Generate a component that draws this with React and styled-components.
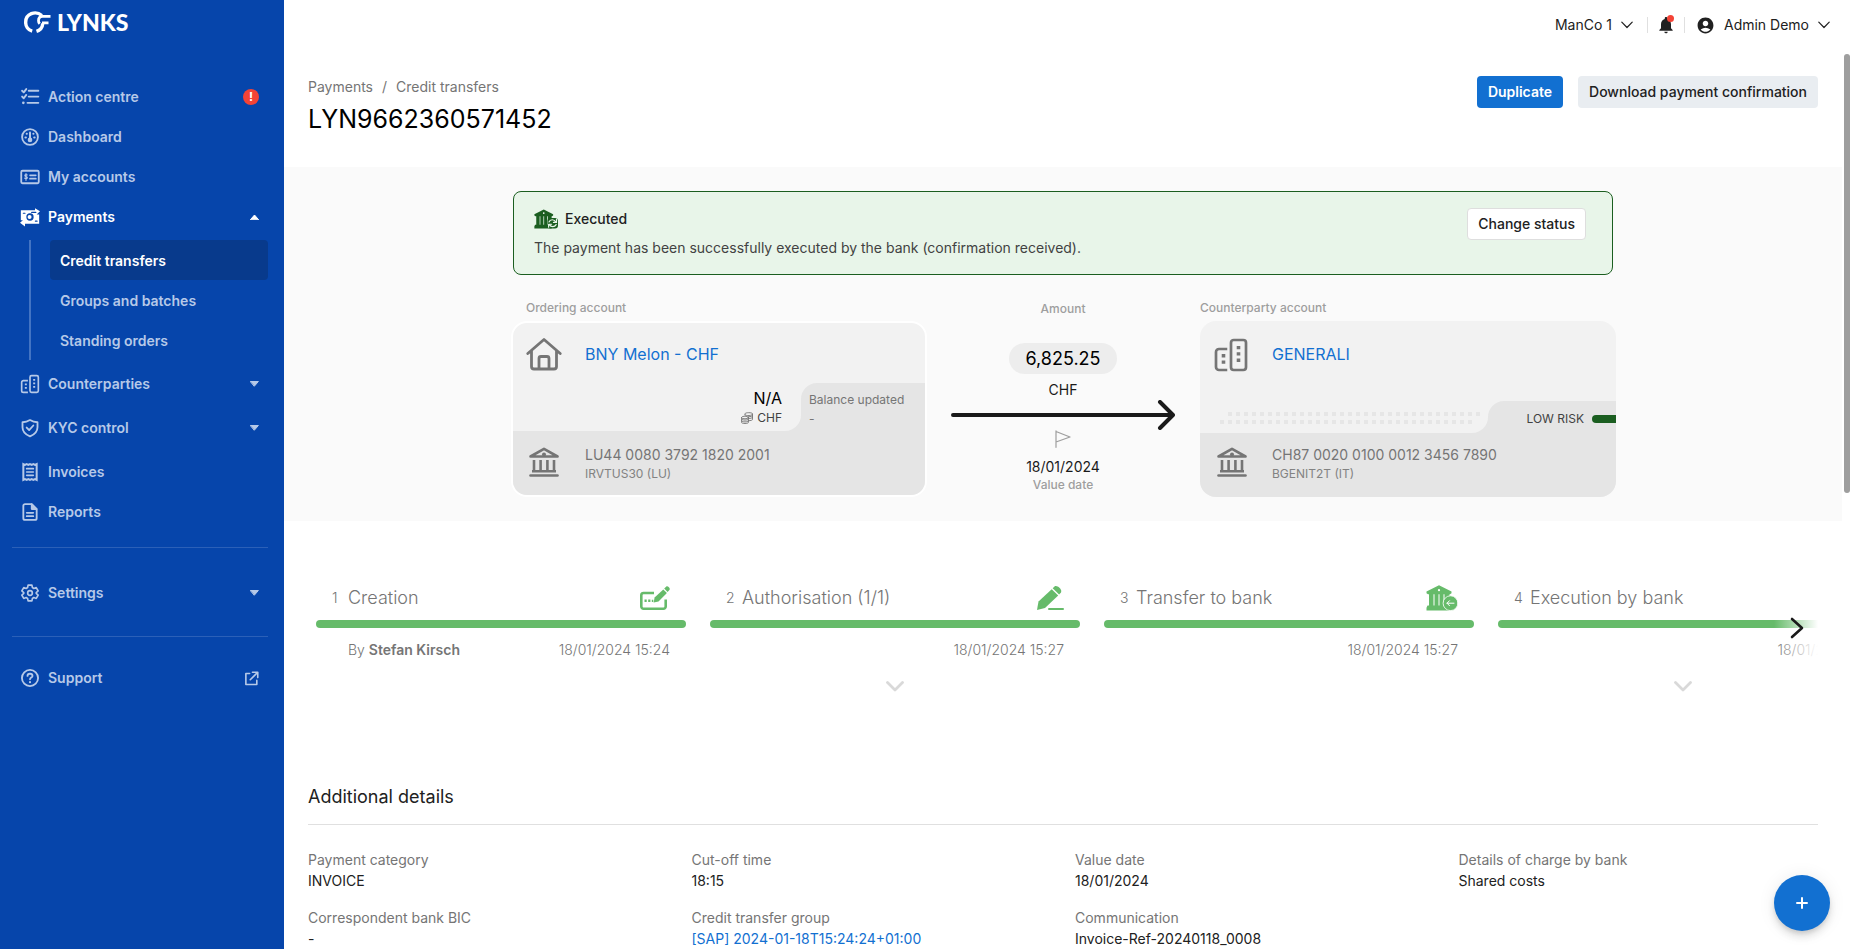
import React from "react";
import styled, { createGlobalStyle, css } from "styled-components";
import { MdAccountCircle, MdNotifications } from "react-icons/md";

const GlobalStyle = createGlobalStyle`
  *, *::before, *::after { box-sizing: border-box; }
  body { margin: 0; font-family: Inter, "Liberation Sans", sans-serif; font-size: 14px; line-height: 20px; color: #212121; background: #fff; }
  button { font: inherit; color: inherit; border: 0; background: none; padding: 0; cursor: pointer; }
  a { color: inherit; text-decoration: none; }
  h1, h2, p, dl, dd, ul, ol { margin: 0; padding: 0; font-weight: 400; list-style: none; }
  svg { display: block; flex: none; }
`;

/* ---------- icons ---------- */

const Icon = ({ size = 18, w, h, box = 24, children, ...rest }) => (
  <svg width={w || size} height={h || size} viewBox={`0 0 ${box} ${box}`} fill="none" stroke="currentColor" strokeWidth="2" strokeLinecap="round" strokeLinejoin="round" aria-hidden="true" {...rest}>
    {children}
  </svg>
);

const TasksIcon = () => (
  <Icon size={20}>
    <path d="M2.500 4.500l2 2 3-4M2.500 11.500l2 2 3-4M10.500 4.500H22M10.500 11.500H22M9 19h13" strokeWidth="2.300" />
    <circle cx="4" cy="19" r="1.600" fill="currentColor" stroke="none" />
  </Icon>
);
const GaugeIcon = () => (
  <Icon size={20}>
    <circle cx="12" cy="12" r="9.500" strokeWidth="2.200" />
    <path d="M12 6.500v8" strokeWidth="2.400" />
    <circle cx="12" cy="15.500" r="1.800" fill="currentColor" />
    <path d="M6.500 12.500h.6M17 12.500h.6M8 8h.2M16 8h.2" strokeWidth="2.400" />
  </Icon>
);
const AccountsIcon = () => (
  <Icon size={20}>
    <rect x="1.500" y="4.500" width="21" height="15" rx="1.500" strokeWidth="2.200" />
    <path d="M12 10h7M12 14h7" />
    <path d="M8.600 9.600c-.6-.7-2.800-.8-2.800.7 0 1.600 3 .8 3 2.500 0 1.500-2.400 1.500-3.200.6M7.200 8v8" strokeWidth="1.400" />
  </Icon>
);
const PaymentsIcon = () => (
  <Icon size={20}>
    <path d="M1 4h17V1.500L24 5l-4 4h3v11H6v3.500L0 19l3.500-3H1z" fill="currentColor" stroke="none" />
    <circle cx="12" cy="12" r="4.400" fill="#0645ab" stroke="none" />
    <circle cx="11.500" cy="12" r="2.400" fill="currentColor" stroke="none" />
    <path d="M4 7.500h2M18.500 17h2M14 6.500h5" stroke="#0645ab" strokeWidth="1.400" />
  </Icon>
);
const BuildingsIcon = ({ size = 20, strokeWidth = 2 }) => (
  <Icon size={size} strokeWidth={strokeWidth}>
    <path d="M9.500 8H4.200A2 2 0 0 0 2 10v10a2 2 0 0 0 2 2h5.500" strokeLinecap="butt" />
    <rect x="12" y="2" width="10" height="20" rx="1.800" />
    <path d="M17 6v2.200M17 10.200v2.200M17 14.400v2.200M7 11.400v2.200M7 15.600v2.200" strokeLinecap="butt" strokeWidth="2.400" />
  </Icon>
);
const ShieldIcon = () => (
  <Icon size={20}>
    <path d="M12 2.500c3 1.800 5.500 2.500 9 2.600v6c0 5-3 8.500-9 10.900-6-2.400-9-5.900-9-10.900v-6c3.500-.1 6-.8 9-2.600z" strokeWidth="2.200" />
    <path d="M8 11.500l3 3 5-5.500" strokeWidth="2.200" />
  </Icon>
);
const ReceiptIcon = () => (
  <Icon size={20} strokeLinejoin="miter">
    <path d="M4 2.500l2 1 2-1 2 1 2-1 2 1 2-1 2 1 2-1v19l-2-1-2 1-2-1-2 1-2-1-2 1-2-1-2 1z" strokeWidth="2.400" />
    <path d="M8 8h8M8 12h8M8 16h8" />
  </Icon>
);
const FileIcon = () => (
  <Icon size={20}>
    <path d="M14 2.500H6a2 2 0 0 0-2 2v15a2 2 0 0 0 2 2h12a2 2 0 0 0 2-2V8.500z" strokeWidth="2.200" />
    <path d="M14 2.500v6h6z" fill="currentColor" />
    <path d="M8 13h8M8 17h8" />
  </Icon>
);
const GearIcon = () => (
  <Icon size={20}>
    <path d="M9.700 2.500h4.600l.6 3 1.700 1 2.900-1 2.300 4-2.300 2v1l2.300 2-2.300 4-2.900-1-1.700 1-.6 3H9.700l-.6-3-1.700-1-2.900 1-2.300-4 2.300-2v-1l-2.300-2 2.300-4 2.900 1 1.700-1z" />
    <circle cx="12" cy="12" r="2.800" />
  </Icon>
);
const HelpIcon = () => (
  <Icon size={20}>
    <circle cx="12" cy="12" r="9.700" strokeWidth="2.200" />
    <path d="M9 9.500c0-3.500 6-3.500 6 0 0 2-3 2-3 4" strokeWidth="2.200" />
    <circle cx="12" cy="17" r="1.300" fill="currentColor" stroke="none" />
  </Icon>
);
const ExternalIcon = () => (
  <Icon size={15}>
    <path d="M9 4H3v17.500h17.500V15M13.500 2H22v8.500M22 2L10 14" strokeWidth="2.600" />
  </Icon>
);
const Caret = ({ up }) => (
  <Icon w={9} h={6} viewBox="0 0 9 6">
    <path d={up ? "M.6 5.500L4.500 1l3.900 4.500z" : "M.6.500h7.800L4.500 5z"} fill="currentColor" strokeWidth="1" />
  </Icon>
);
const ChevronDown = () => (
  <Icon w={12} h={8} viewBox="0 0 12 8" strokeWidth="1.200">
    <path d="M.8 1.200L6 6.500l5.200-5.300" />
  </Icon>
);
const HouseIcon = () => (
  <Icon w={36} h={34} viewBox="0 0 36 34" strokeWidth="2.800">
    <path d="M1.800 16.500L18 2.500l16.200 14M5.500 14v15.500a2.500 2.500 0 0 0 2.500 2.500h20a2.500 2.500 0 0 0 2.500-2.500V14M13 31.500V21.500a2 2 0 0 1 2-2h6a2 2 0 0 1 2 2v10" />
  </Icon>
);
const BankIcon = () => (
  <Icon w={30} h={30} viewBox="0 0 30 30">
    <path d="M1.500 9.500L15 1.800l13.500 7.700z" strokeWidth="2.600" />
    <circle cx="15" cy="7.500" r="2" fill="currentColor" stroke="none" />
    <path d="M5 13v10M11.600 13v10M18.400 13v10M25 13v10M3 24.200h24" strokeWidth="2.600" strokeLinecap="butt" />
    <path d="M1.500 28.500h27" strokeWidth="2.600" />
  </Icon>
);
const SolidBank = ({ w, h, mark }) => (
  <Icon w={w} h={h} viewBox="0 0 32 26">
    <g fill="currentColor" stroke="none">
      <path d="M.5 6.500L13 .2l12.500 6.300v1.800l-1.500 1H2L.5 8.300z" />
      <path d="M3 9h4.500v12H3zM8.500 9h4v12h-4zM13.500 9h4v12h-4zM18.500 9h5v12h-5zM1.500 20.500h22v5.100H.5v-2.800z" />
    </g>
    <circle cx="13" cy="5.200" r="1.100" fill="#fff" stroke="none" />
    {mark === "arrow" ? (
      <g>
        <circle cx="24.500" cy="18.200" r="7.400" fill="currentColor" stroke="#fff" strokeWidth=".8" />
        <path d="M28 18.200h-7M23.500 15.700L21 18.200l2.500 2.500" stroke="#fff" strokeWidth="1" />
      </g>
    ) : (
      <g>
        <rect x="18" y="11.500" width="14" height="14" rx="4" fill="currentColor" stroke="none" />
        <path d="M20 17c1.500-4 7-4 9 0M30 13v4.500h-4M29.500 20.500c-2 3.500-7 3.500-9 0M19.500 24v-4h4" stroke="#e8f5e9" strokeWidth="1.600" />
      </g>
    )}
  </Icon>
);
const FormIcon = () => (
  <Icon w={30} h={24} viewBox="0 0 30 24">
    <path d="M14 7H3.500A2.200 2.200 0 0 0 1.300 9v11.500a2.200 2.200 0 0 0 2.200 2.200h20a2.200 2.200 0 0 0 2.200-2.200V13.500" strokeWidth="2.600" strokeLinecap="butt" />
    <path d="M13.600 16.500l1-4.900L23.300 3.400l3.600 3.600L18.500 15.600z" fill="currentColor" stroke="none" />
    <path d="M24.200 2.600l1.900-1.900c1.500-1.500 4.800 1.700 3.300 3.300l-1.800 1.900z" fill="currentColor" stroke="none" />
    <path d="M4.500 13.500h2.200v2.500H4.500zM8.200 13.500h2.200v2.500H8.200zM11.800 13.800h1.500v2.200h-1.500z" fill="currentColor" stroke="none" />
  </Icon>
);
const PenIcon = () => (
  <Icon w={27} h={24} viewBox="0 0 27 24">
    <path d="M0 24l1.500-8.500L14.700 3.300l6.500 6.300L8 22z" fill="currentColor" stroke="none" />
    <path d="M15.700 2.300L17.500.6c2.500-2.200 8.500 3.400 6.300 6.100l-1.700 1.900z" fill="currentColor" stroke="none" />
    <path d="M12 23h14" strokeWidth="2" />
  </Icon>
);
const CoinsIcon = () => (
  <Icon w={12} h={12} viewBox="0 0 12 12" strokeWidth=".9">
    <ellipse cx="4" cy="5.500" rx="3.400" ry="1.300" />
    <path d="M.6 5.500v5c0 1.300 6.800 1.300 6.800 0v-5M.6 7.200c0 1.300 6.800 1.300 6.800 0M.6 9c0 1.300 6.800 1.300 6.800 0M4 3V1.800C4 .3 11.500.3 11.500 1.800V7.500c0 .6-1.500 1.200-4 1.200M4 3c1 1 7.500.9 7.500-.8M7.500 6.500c2.500 0 4-.5 4-1.300M7.500 4.700c2.500 0 4-.5 4-1.200" />
  </Icon>
);
const FlagIcon = () => (
  <Icon w={16} h={18} viewBox="0 0 16 18" strokeWidth="1.200">
    <path d="M1 .8v16.500M1 1.500l14 5.500L1 12" />
  </Icon>
);
const TransferArrow = () => (
  <Icon w={224} h={30} viewBox="0 0 224 30" strokeWidth="4">
    <path d="M2 15h219M209 2l13 13-13 13" />
  </Icon>
);
const LogoMark = () => (
  <Icon w={27} h={22} viewBox="0 0 27 22" strokeLinecap="butt">
    <path d="M8.200 20.200A9 9 0 0 1 1.700 11C1.700 3 11.500-1 17.800 4.500" strokeWidth="3.400" />
    <path d="M12.500 20.300c3.800-1.200 6-4.300 6.300-8" strokeWidth="3.400" />
    <path d="M26.500 5.300H18.500c-3 0-4 2-4 4.500 0 1.300.4 2.200 1.200 3M24.500 11.800h-6.500" strokeWidth="2.800" />
  </Icon>
);

/* ---------- shell ---------- */

const Shell = styled.div`
  display: flex;
  height: 100vh;
  overflow: hidden;
`;
const Sidebar = styled.aside`
  flex: 0 0 284px;
  background: #0645ab;
  color: #b6c9e8;
`;
const Logo = styled.a`
  display: flex;
  align-items: center;
  gap: 6px;
  height: 44px;
  padding: 0 24px;
  color: #fff;
  font: 900 23px/28px Lato, sans-serif;
`;
const Nav = styled.nav`
  padding: 33px 16px 0 12px;
`;
const NavItem = styled.a`
  display: flex;
  align-items: center;
  gap: 8px;
  height: 40px;
  padding: 0 9px 0 8px;
  margin-top: ${(p) => (p.$spaced ? 4 : 0)}px;
  font-weight: 600;
  color: ${(p) => (p.$active ? "#fff" : "inherit")};
`;
const NavLabel = styled.span`
  flex: 1;
`;
const AlertBadge = styled.span`
  width: 16px;
  height: 16px;
  border-radius: 50%;
  background: #f44336;
  color: #fff;
  font-size: 12px;
  font-weight: 700;
  line-height: 16px;
  text-align: center;
`;
const SubNav = styled.div`
  margin: 3px 0 4px 17px;
  padding-left: 19px;
  border-left: 2px solid #4374c3;
`;
const SubItem = styled.a`
  display: flex;
  align-items: center;
  height: 40px;
  padding: 2px 10px 0;
  border-radius: 4px;
  font-weight: 600;
  ${(p) => p.$active && css`background: #083a8c; color: #fff;`}
`;
const NavDivider = styled.hr`
  border: 0;
  height: 1px;
  margin: ${(p) => (p.$first ? "15px 0 25px" : "23px 0 21px")};
  background: #2b60b8;
`;

const Main = styled.div`
  display: flex;
  flex-direction: column;
  flex: 1;
  min-width: 0;
`;
const TopBar = styled.header`
  display: flex;
  flex: 0 0 54px;
  justify-content: flex-end;
  padding: 15px 20px 19px;
`;
const TopButton = styled.button`
  display: flex;
  align-items: center;
  gap: 9px;
  padding-left: ${(p) => (p.$first ? 0 : 11)}px;
  padding-right: ${(p) => (p.$last ? 0 : 14)}px;
`;
const BellButton = styled.button`
  position: relative;
  display: flex;
  align-items: center;
  justify-content: center;
  width: 36px;
`;
const BellDot = styled.span`
  position: absolute;
  top: 0;
  right: 10px;
  width: 7px;
  height: 7px;
  border-radius: 50%;
  background: #f44336;
`;
const TopDivider = styled.span`
  width: 1px;
  height: 16px;
  margin-top: 2px;
  background: #e0e0e0;
`;
const ScrollRow = styled.div`
  display: flex;
  flex: 1;
  min-height: 0;
`;
const Content = styled.main`
  flex: 1;
  min-width: 0;
  overflow-y: auto;
  scrollbar-width: none;
`;
const ScrollTrack = styled.div`
  flex: 0 0 8px;
  padding-left: 2px;
`;
const ScrollThumb = styled.div`
  height: 49%;
  border-radius: 3px;
  background: #9e9e9e;
`;

/* ---------- page head ---------- */

const PageHead = styled.section`
  display: flex;
  justify-content: space-between;
  align-items: flex-start;
  min-height: 113px;
  padding: 22px 24px;
`;
const Breadcrumb = styled.nav`
  display: flex;
  gap: 9px;
  line-height: 22px;
  color: #757575;
`;
const Title = styled.h1`
  margin-top: 5px;
  font-size: 25px;
  line-height: 32px;
  color: #000;
`;
const Actions = styled.div`
  display: flex;
  gap: 15px;
`;
const Button = styled.button`
  height: 32px;
  padding: 0 11px;
  border-radius: 4px;
  white-space: nowrap;
  font-weight: 500;
  ${(p) =>
    p.$kind === "primary"
      ? css`background: #1270d1; color: #fff; font-weight: 600;`
      : p.$kind === "outline"
      ? css`background: #fff; border: 1px solid #dedede; padding: 0 10px;`
      : css`background: #e9edf1;`}
`;

/* ---------- transfer summary ---------- */

const Band = styled.section`
  padding: 24px;
  background: #fafafa;
`;
const BandInner = styled.div`
  max-width: 1100px;
  margin: 0 auto;
`;
const Banner = styled.div`
  display: flex;
  justify-content: space-between;
  align-items: flex-start;
  height: 84px;
  padding: 16px 26px 16px 20px;
  border: 1px solid #1b5e20;
  border-radius: 8px;
  background: #e8f5e9;
`;
const BannerTitle = styled.div`
  display: flex;
  align-items: center;
  gap: 7px;
  height: 22px;
  color: #1b5e20;
  strong { font-weight: 500; color: #212121; }
`;
const BannerText = styled.p`
  margin-top: 8px;
  color: #424242;
`;
const Flow = styled.div`
  display: grid;
  grid-template-columns: 416fr 273fr 416fr;
  margin: 25px -3px 0 -2px;
`;
const Caption = styled.div`
  padding-left: ${(p) => (p.$inset ? 15 : 0)}px;
  font-size: 12px;
  font-weight: 500;
  line-height: 16px;
  color: #9e9e9e;
`;
const Card = styled.div`
  display: flex;
  flex-direction: column;
  height: 176px;
  margin-top: 5px;
  overflow: hidden;
  border-radius: 16px;
  background: #f2f2f2;
  ${(p) => p.$outlined && css`border: 2px solid #fff;`}
`;
const CardTop = styled.div`
  display: flex;
  flex: 1;
  align-items: flex-start;
  padding-top: ${(p) => (p.$outlined ? 14 : 16)}px;
`;
const IconCell = styled.div`
  display: flex;
  flex: 0 0 72px;
  padding-left: ${(p) => p.$inset}px;
  color: #757575;
`;
const AccountLink = styled.a`
  font-size: 16px;
  line-height: 34px;
  color: #1270d1;
`;
const TabRow = styled.div`
  display: flex;
  height: ${(p) => p.$height}px;
`;
const TabLeft = styled.div`
  flex: 0 0 288px;
  background: #e5e5e5;
`;
const TabLeftFace = styled.div`
  height: 100%;
  border-bottom-right-radius: 16px;
  background: #f2f2f2;
`;
const TabRight = styled.div`
  flex: 1;
  background: #f2f2f2;
`;
const TabRightFace = styled.div`
  height: 100%;
  border-top-left-radius: 16px;
  background: #e5e5e5;
`;
const Balance = styled(TabLeftFace)`
  display: flex;
  flex-direction: column;
  align-items: flex-end;
  padding: 4px 19px 0 0;
  font-size: 16px;
  line-height: 22px;
  color: #000;
`;
const Currency = styled.span`
  display: flex;
  align-items: center;
  gap: 4px;
  font-size: 12px;
  line-height: 18px;
  color: #424242;
  svg { color: #757575; }
`;
const Updated = styled(TabRightFace)`
  padding: 7px 0 0 8px;
  font-size: 12px;
  line-height: 19px;
  white-space: nowrap;
  color: #757575;
`;
const Dots = styled(TabLeftFace)`
  padding: 11px 6px 0 20px;
`;
const DotLine = styled.div`
  height: 4px;
  margin: ${(p) => (p.$shifted ? "0 0 4px 8px" : "0 8px 0 0")};
  background: repeating-linear-gradient(90deg, #e6e6e6 0 4px, transparent 4px 8px);
`;
const Risk = styled(TabRightFace)`
  display: flex;
  align-items: center;
  justify-content: flex-end;
  gap: 8px;
  padding-top: 4px;
  font-size: 12px;
  color: #424242;
`;
const RiskBar = styled.span`
  width: 24px;
  height: 8px;
  border-radius: 4px 0 0 4px;
  background: #1b5e20;
`;
const CardBottom = styled.div`
  display: flex;
  height: 64px;
  padding-top: ${(p) => (p.$outlined ? 14 : 12)}px;
  background: #e5e5e5;
  color: #757575;
`;
const BankIconCell = styled(IconCell)`
  padding-top: 2px;
`;
const Bic = styled.div`
  font-size: 12px;
  line-height: 18px;
  color: #828282;
`;
const AmountColumn = styled.div`
  display: flex;
  flex-direction: column;
  align-items: center;
  padding: 1px 1px 0 0;
  color: #1a1a1a;
`;
const AmountPill = styled.div`
  margin: 26px 0 6px;
  padding: 0 16px;
  border-radius: 16px;
  background: #ededed;
  font-size: 18px;
  line-height: 31px;
  color: #000;
`;
const FlagBox = styled.div`
  margin-bottom: 9px;
  color: #9e9e9e;
`;

/* ---------- stepper ---------- */

const Stepper = styled.section`
  position: relative;
  margin: 0 24px;
  padding: 64px 0 0 8px;
  height: 262px;
  overflow: hidden;
`;
const Steps = styled.ol`
  display: flex;
  gap: 24px;
`;
const Step = styled.li`
  flex: 0 0 370px;
  color: #757575;
`;
const StepHead = styled.div`
  display: flex;
  align-items: center;
  height: 26px;
  padding: 0 16px;
  font-size: 18px;
  font-weight: 300;
  svg { margin-left: auto; color: #66bb6a; }
`;
const StepNumber = styled.span`
  width: 16px;
  font-size: 14px;
`;
const StepBar = styled.div`
  height: 8px;
  margin: 9px 0 12px;
  border-radius: 4px;
  background: #66bb6a;
`;
const StepMeta = styled.div`
  display: flex;
  justify-content: space-between;
  padding: 0 16px 0 32px;
  margin-right: ${(p) => (p.$extended ? -36 : 0)}px;
  font-weight: 300;
  strong { font-weight: 600; }
`;
const Expand = styled.button`
  display: block;
  margin: 21px auto 0;
  color: #d9d9d9;
`;
const Fade = styled.div`
  position: absolute;
  top: 0;
  right: 0;
  bottom: 0;
  width: 44px;
  background: linear-gradient(90deg, rgba(255, 255, 255, 0), #fff);
`;
const NextButton = styled.button`
  position: absolute;
  top: 96px;
  right: 14px;
  color: #1a1a1a;
`;

/* ---------- details ---------- */

const Details = styled.section`
  padding: 0 24px 80px;
`;
const DetailsTitle = styled.h2`
  padding-bottom: 13px;
  border-bottom: 1px solid #e0e0e0;
  font-size: 18px;
  line-height: 28px;
`;
const DetailGrid = styled.dl`
  display: grid;
  grid-template-columns: repeat(4, 1fr);
  gap: 16px 24px;
  padding-top: 24px;
  dt { line-height: 22px; color: #757575; }
  dd a { color: #1270d1; }
`;
const Fab = styled.button`
  position: fixed;
  right: 20px;
  bottom: 18px;
  display: flex;
  align-items: center;
  justify-content: center;
  width: 56px;
  height: 56px;
  border-radius: 50%;
  background: #1270d1;
  color: #fff;
  box-shadow: 0 3px 5px -1px rgba(0, 0, 0, 0.12), 0 6px 10px rgba(0, 0, 0, 0.1), 0 1px 18px rgba(0, 0, 0, 0.08);
`;

const steps = [
  { title: "Creation", icon: <FormIcon />, by: "Stefan Kirsch", date: "18/01/2024 15:24" },
  { title: "Authorisation (1/1)", icon: <PenIcon />, date: "18/01/2024 15:27", expand: true },
  { title: "Transfer to bank", icon: <SolidBank w={32} h={26} mark="arrow" />, date: "18/01/2024 15:27" },
  { title: "Execution by bank", icon: <SolidBank w={32} h={26} mark="cycle" />, date: "18/01/2024 15:27", expand: true },
];

const details = [
  ["Payment category", "INVOICE"],
  ["Cut-off time", "18:15"],
  ["Value date", "18/01/2024"],
  ["Details of charge by bank", "Shared costs"],
  ["Correspondent bank BIC", "-"],
  ["Credit transfer group", <a href="#group">[SAP] 2024-01-18T15:24:24+01:00</a>],
  ["Communication", "Invoice-Ref-20240118_0008"],
];

const NavLink = ({ icon, label, end, ...rest }) => (
  <NavItem href="#" {...rest}>
    {icon}
    <NavLabel>{label}</NavLabel>
    {end}
  </NavItem>
);

export default function App() {
  return (
    <Shell>
      <GlobalStyle />
      <Sidebar>
        <Logo href="#">
          <LogoMark />
          LYNKS
        </Logo>
        <Nav aria-label="Main">
          <NavLink icon={<TasksIcon />} label="Action centre" end={<AlertBadge>!</AlertBadge>} />
          <NavLink icon={<GaugeIcon />} label="Dashboard" />
          <NavLink icon={<AccountsIcon />} label="My accounts" />
          <NavLink icon={<PaymentsIcon />} label="Payments" end={<Caret up />} $active />
          <SubNav>
            <SubItem href="#" $active>Credit transfers</SubItem>
            <SubItem href="#">Groups and batches</SubItem>
            <SubItem href="#">Standing orders</SubItem>
          </SubNav>
          <NavLink icon={<BuildingsIcon />} label="Counterparties" end={<Caret />} />
          <NavLink icon={<ShieldIcon />} label="KYC control" end={<Caret />} $spaced />
          <NavLink icon={<ReceiptIcon />} label="Invoices" $spaced />
          <NavLink icon={<FileIcon />} label="Reports" />
          <NavDivider $first />
          <NavLink icon={<GearIcon />} label="Settings" end={<Caret />} />
          <NavDivider />
          <NavLink icon={<HelpIcon />} label="Support" end={<ExternalIcon />} />
        </Nav>
      </Sidebar>

      <Main>
        <TopBar>
          <TopButton $first>ManCo 1 <ChevronDown /></TopButton>
          <TopDivider />
          <BellButton aria-label="Notifications">
            <MdNotifications size={20} />
            <BellDot />
          </BellButton>
          <TopDivider />
          <TopButton $last>
            <MdAccountCircle size={19} />
            Admin Demo
            <ChevronDown />
          </TopButton>
        </TopBar>

        <ScrollRow>
          <Content>
            <PageHead>
              <div>
                <Breadcrumb aria-label="Breadcrumb">
                  <a href="#">Payments</a>
                  <span>/</span>
                  <a href="#">Credit transfers</a>
                </Breadcrumb>
                <Title>LYN9662360571452</Title>
              </div>
              <Actions>
                <Button $kind="primary">Duplicate</Button>
                <Button>Download payment confirmation</Button>
              </Actions>
            </PageHead>

            <Band>
              <BandInner>
                <Banner>
                  <div>
                    <BannerTitle>
                      <SolidBank w={24} h={20} mark="cycle" />
                      <strong>Executed</strong>
                    </BannerTitle>
                    <BannerText>The payment has been successfully executed by the bank (confirmation received).</BannerText>
                  </div>
                  <Button $kind="outline">Change status</Button>
                </Banner>

                <Flow>
                  <div>
                    <Caption $inset>Ordering account</Caption>
                    <Card $outlined>
                      <CardTop $outlined>
                        <IconCell $inset={13}><HouseIcon /></IconCell>
                        <AccountLink href="#">BNY Melon - CHF</AccountLink>
                      </CardTop>
                      <TabRow $height={48}>
                        <TabLeft>
                          <Balance>
                            N/A
                            <Currency><CoinsIcon /> CHF</Currency>
                          </Balance>
                        </TabLeft>
                        <TabRight>
                          <Updated>Balance updated<br />-</Updated>
                        </TabRight>
                      </TabRow>
                      <CardBottom $outlined>
                        <BankIconCell $inset={16}><BankIcon /></BankIconCell>
                        <div>
                          LU44 0080 3792 1820 2001
                          <Bic>IRVTUS30 (LU)</Bic>
                        </div>
                      </CardBottom>
                    </Card>
                  </div>

                  <AmountColumn>
                    <Caption>Amount</Caption>
                    <AmountPill>6,825.25</AmountPill>
                    <span>CHF</span>
                    <TransferArrow />
                    <FlagBox><FlagIcon /></FlagBox>
                    <span>18/01/2024</span>
                    <Caption>Value date</Caption>
                  </AmountColumn>

                  <div>
                    <Caption>Counterparty account</Caption>
                    <Card>
                      <CardTop>
                        <IconCell $inset={13}><BuildingsIcon size={36} strokeWidth={1.8} /></IconCell>
                        <AccountLink href="#">GENERALI</AccountLink>
                      </CardTop>
                      <TabRow $height={32}>
                        <TabLeft>
                          <Dots>
                            <DotLine $shifted />
                            <DotLine />
                          </Dots>
                        </TabLeft>
                        <TabRight>
                          <Risk>LOW RISK <RiskBar /></Risk>
                        </TabRight>
                      </TabRow>
                      <CardBottom>
                        <BankIconCell $inset={17}><BankIcon /></BankIconCell>
                        <div>
                          CH87 0020 0100 0012 3456 7890
                          <Bic>BGENIT2T (IT)</Bic>
                        </div>
                      </CardBottom>
                    </Card>
                  </div>
                </Flow>
              </BandInner>
            </Band>

            <Stepper>
              <Steps>
                {steps.map((step, i) => (
                  <Step key={step.title}>
                    <StepHead>
                      <StepNumber>{i + 1}</StepNumber>
                      {step.title}
                      {step.icon}
                    </StepHead>
                    <StepBar />
                    <StepMeta $extended={i === steps.length - 1}>
                      <span>{step.by && <>By <strong>{step.by}</strong></>}</span>
                      <span>{step.date}</span>
                    </StepMeta>
                    {step.expand && (
                      <Expand aria-label={`Show more about ${step.title}`}>
                        <Icon w={18} h={11} viewBox="0 0 18 11" strokeWidth="2.800">
                          <path d="M1.500 1.500L9 9l7.500-7.500" />
                        </Icon>
                      </Expand>
                    )}
                  </Step>
                ))}
              </Steps>
              <Fade />
              <NextButton aria-label="Next steps">
                <Icon w={14} h={22} viewBox="0 0 14 22" strokeWidth="2.600">
                  <path d="M2 2l10 9-10 9" />
                </Icon>
              </NextButton>
            </Stepper>

            <Details>
              <DetailsTitle>Additional details</DetailsTitle>
              <DetailGrid>
                {details.map(([label, value]) => (
                  <div key={label}>
                    <dt>{label}</dt>
                    <dd>{value}</dd>
                  </div>
                ))}
              </DetailGrid>
            </Details>
          </Content>
          <ScrollTrack>
            <ScrollThumb />
          </ScrollTrack>
        </ScrollRow>
      </Main>

      <Fab aria-label="Add">
        <Icon w={14} h={14} viewBox="0 0 14 14">
          <path d="M7 2v10M2 7h10" />
        </Icon>
      </Fab>
    </Shell>
  );
}
